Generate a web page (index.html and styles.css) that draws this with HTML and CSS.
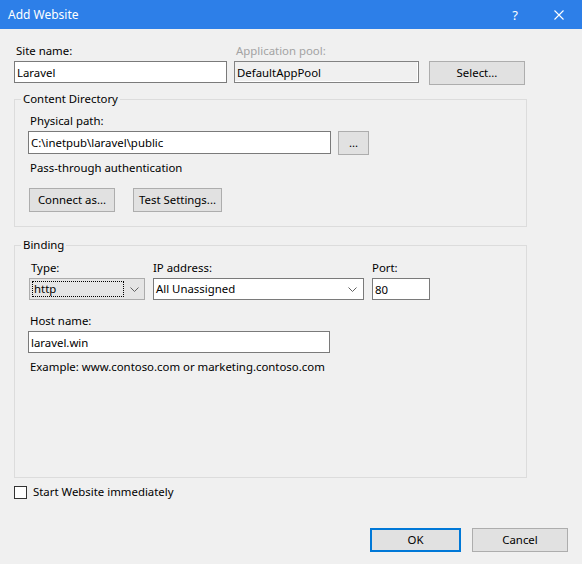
FILE: index.html
```html
<!DOCTYPE html>
<html lang="en">
<head>
    <meta charset="UTF-8">
    <title>Add Website</title>
    <link rel="stylesheet" href="styles.css">
</head>
<body>

<div class="dialog">
    <header class="titlebar">
        <span class="title">Add Website</span>
        <span class="help">?</span>
        <svg class="close" width="10" height="10" viewBox="0 0 10 10">
            <path d="M0.5 0.5 L9.5 9.5 M9.5 0.5 L0.5 9.5" stroke="#fff" stroke-width="1.1" fill="none"/>
        </svg>
    </header>

    <div class="body">
        <div class="site-row">
            <div class="field site-name">
                <label>Site name:</label>
                <input type="text" class="text" value="Laravel">
            </div>
            <div class="field app-pool">
                <label class="disabled">Application pool:</label>
                <input type="text" class="text readonly" value="DefaultAppPool" readonly>
            </div>
            <button class="btn btn-select">Select...</button>
        </div>

        <fieldset class="group content-dir">
            <legend>Content Directory</legend>
            <label>Physical path:</label>
            <div class="path-row">
                <input type="text" class="text path" value="C:\inetpub\laravel\public">
                <button class="btn btn-browse">...</button>
            </div>
            <p class="note">Pass-through authentication</p>
            <div class="btn-row">
                <button class="btn btn-connect">Connect as...</button>
                <button class="btn btn-test">Test Settings...</button>
            </div>
        </fieldset>

        <fieldset class="group binding">
            <legend>Binding</legend>
            <div class="binding-row">
                <div class="field type">
                    <label>Type:</label>
                    <div class="combo combo-focus">
                        <span class="combo-value">http</span>
                        <svg class="chevron" width="9" height="5" viewBox="0 0 9 5">
                            <path d="M0.5 0.5 L4.5 4.5 L8.5 0.5" stroke="#606060" fill="none"/>
                        </svg>
                    </div>
                </div>
                <div class="field ip">
                    <label>IP address:</label>
                    <div class="combo combo-edit">
                        <span class="combo-value">All Unassigned</span>
                        <svg class="chevron" width="9" height="5" viewBox="0 0 9 5">
                            <path d="M0.5 0.5 L4.5 4.5 L8.5 0.5" stroke="#606060" fill="none"/>
                        </svg>
                    </div>
                </div>
                <div class="field port">
                    <label>Port:</label>
                    <input type="text" class="text" value="80">
                </div>
            </div>
            <div class="field host">
                <label>Host name:</label>
                <input type="text" class="text" value="laravel.win">
            </div>
            <p class="example">Example: www.contoso.com or marketing.contoso.com</p>
        </fieldset>

        <label class="check-row">
            <input type="checkbox" class="check">
            <span>Start Website immediately</span>
        </label>

        <div class="footer">
            <button class="btn btn-ok">OK</button>
            <button class="btn btn-cancel">Cancel</button>
        </div>
    </div>
</div>

</body>
</html>
```

FILE: styles.css
```css
* {
    margin: 0;
    padding: 0;
    box-sizing: border-box;
}

body {
    font-family: "Noto Sans", "Open Sans", sans-serif;
    font-size: 11.4px;
    line-height: 16px;
    color: #000;
    background: #f0f0f0;
}

.dialog {
    width: 582px;
    height: 564px;
    display: flex;
    flex-direction: column;
    background: #f0f0f0;
}

/* title bar */
.titlebar {
    height: 29px;
    flex: none;
    display: flex;
    align-items: center;
    background: #2d7fe8;
    color: #fff;
    padding-left: 8px;
    font-size: 12px;
}

.title {
    flex: 1;
}

.help {
    font-size: 13px;
    margin-right: 36px;
}

.close {
    margin-right: 18px;
}

/* body */
.body {
    flex: 1;
    display: flex;
    flex-direction: column;
    padding: 14px 14px 12px 14px;
}

.field {
    display: flex;
    flex-direction: column;
}

.field label {
    padding-left: 2px;
    margin-bottom: 2px;
}

label.disabled {
    color: #a3a3a3;
}

.text {
    font: inherit;
    height: 22px;
    padding: 2px 2px;
    border: 1px solid #7a7a7a;
    background: #fff;
    color: #000;
    outline: none;
}

.text.readonly {
    background: #f0f0f0;
    border-color: #828282;
    box-shadow: inset -1px -1px 0 #fff;
}

.btn {
    font: inherit;
    height: 24px;
    background: #e1e1e1;
    border: 1px solid #adadad;
    color: #000;
    text-align: center;
}

.site-row {
    display: flex;
    align-items: flex-start;
}

.site-name {
    width: 213px;
}

.app-pool {
    width: 185px;
    margin-left: 7px;
}

.btn-select {
    width: 96px;
    margin-left: 10px;
    margin-top: 18px;
}

/* group boxes */
.group {
    width: 513px;
    border: 1px solid #dcdcdc;
    padding: 6px 13px 14px 13px;
}

.group legend {
    margin-left: -7px;
    padding: 0 2px;
}

.content-dir {
    margin-top: 6px;
}

.content-dir > label {
    display: block;
    padding-left: 2px;
    margin-bottom: 2px;
}

.path-row {
    display: flex;
    align-items: flex-start;
}

.path {
    width: 303px;
    height: 23px;
}

.btn-browse {
    width: 31px;
    margin-left: 7px;
}

.note {
    margin-top: 5px;
    padding-left: 2px;
}

.btn-row {
    display: flex;
    margin-top: 12px;
}

.btn-connect {
    width: 86px;
    margin-left: 1px;
}

.btn-test {
    width: 89px;
    margin-left: 18px;
}

.binding {
    margin-top: 10px;
    padding-top: 7px;
    flex: 1;
}

.binding-row {
    display: flex;
}

.type {
    width: 116px;
    margin-left: 1px;
}

.ip {
    width: 211px;
    margin-left: 8px;
}

.ip label {
    padding-left: 0;
}

.port {
    width: 58px;
    margin-left: 8px;
}

.port label {
    padding-left: 0;
}

.combo {
    height: 22px;
    display: flex;
    align-items: center;
    padding-left: 2px;
    padding-right: 6px;
}

.combo-value {
    flex: 1;
}

.combo-focus {
    background: #e5e5e5;
    border: 1px solid #acacac;
    padding: 2px 5px 2px 2px;
}

.combo-focus .combo-value {
    height: 16px;
    border: 1px dotted #000;
    margin-right: 6px;
    line-height: 14px;
    padding-left: 1px;
}

.combo-edit {
    background: #fff;
    border: 1px solid #7a7a7a;
    padding-left: 2px;
}

.host {
    margin-top: 13px;
    width: 302px;
}

.example {
    margin-top: 6px;
    padding-left: 2px;
}

/* checkbox */
.check-row {
    display: flex;
    align-items: center;
    margin-top: 6px;
    height: 16px;
    flex: none;
}

.check {
    appearance: none;
    width: 13px;
    height: 13px;
    border: 1px solid #333;
    background: #fff;
    margin-right: 6px;
}

/* dialog buttons */
.footer {
    display: flex;
    justify-content: flex-end;
    margin-top: 28px;
    flex: none;
}

.btn-ok {
    width: 91px;
    border: 2px solid #0078d7;
}

.btn-cancel {
    width: 96px;
    margin-left: 11px;
}
```
